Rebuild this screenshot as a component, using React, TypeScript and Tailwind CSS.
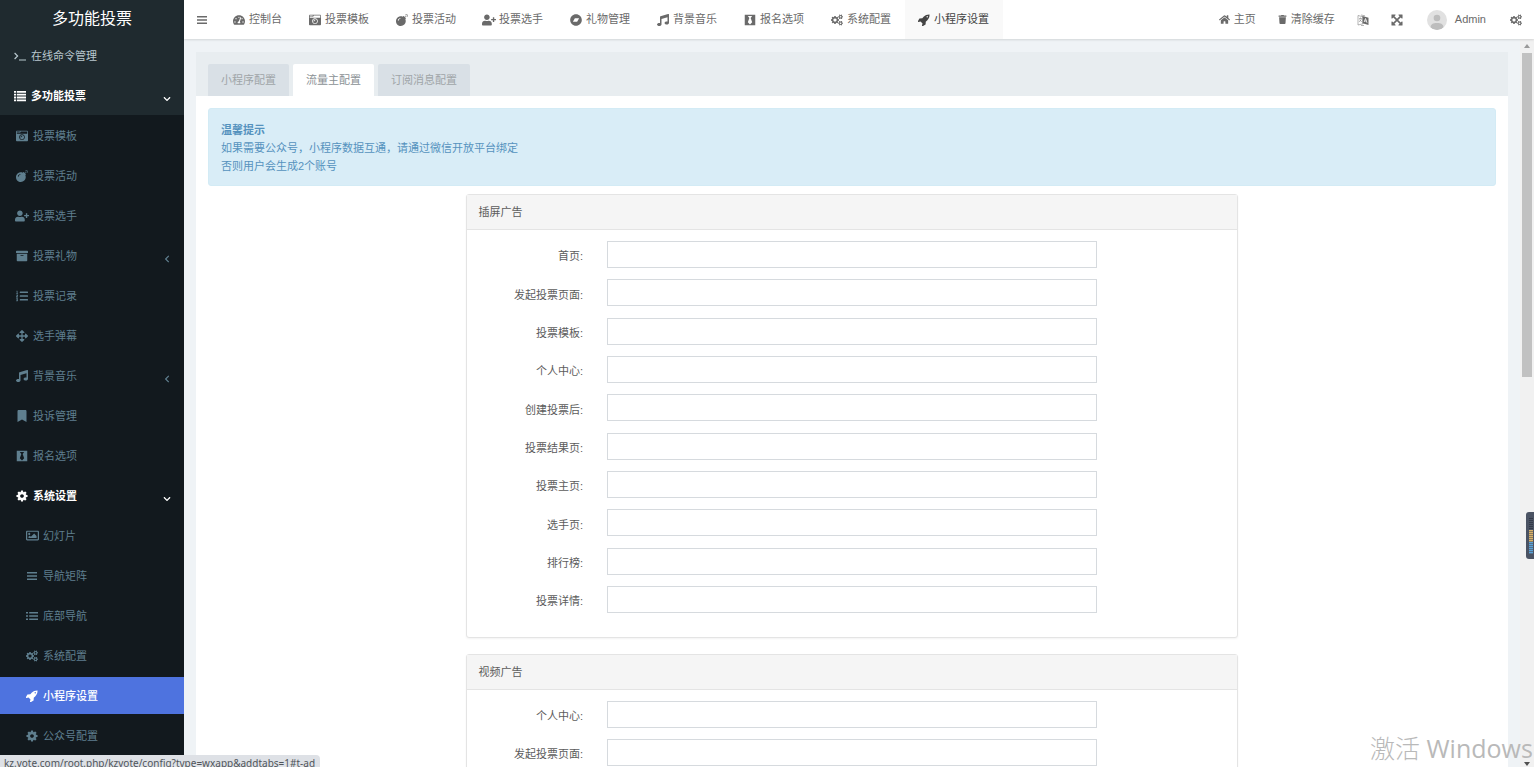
import type { ComponentType } from "react";
import clsx from "clsx";
import {
  FaArchive,
  FaArrowsAlt,
  FaBandcamp,
  FaBlackTie,
  FaBomb,
  FaBookmark,
  FaCameraRetro,
  FaChevronDown,
  FaHome,
  FaListOl,
  FaMusic,
  FaRegImage,
  FaTachometerAlt,
  FaTrash,
  FaUserPlus,
} from "react-icons/fa";

type IconProps = { className?: string };
type Icon = ComponentType<IconProps>;

function CogsIcon({ className }: IconProps) {
  return (
    <svg viewBox="0 0 1920 1792" fill="currentColor" className={className} aria-hidden="true">
      <path d="M896 896q0-106-75-181t-181-75-181 75-75 181 75 181 181 75 181-75 75-181zm768 512q0-52-38-90t-90-38-90 38-38 90q0 53 37.500 90.500t90.500 37.500 90.500-37.500 37.500-90.500zm0-1024q0-52-38-90t-90-38-90 38-38 90q0 53 37.500 90.500t90.500 37.500 90.500-37.500 37.500-90.500zm-384 421v185q0 10-7 19.500t-16 10.500l-155 24q-11 35-32 76 34 48 90 115 7 11 7 20 0 12-7 19-23 30-82.500 89.500t-78.500 59.500q-11 0-21-7l-115-90q-37 19-77 31-11 108-23 155-7 24-30 24h-186q-11 0-20-7.500t-10-17.500l-23-153q-34-10-75-31l-118 89q-7 7-20 7-11 0-21-8-144-133-144-160 0-9 7-19 10-14 41-53t47-61q-23-44-35-82l-152-24q-10-1-17-9.500t-7-19.500v-185q0-10 7-19.500t16-10.500l155-24q11-35 32-76-34-48-90-115-7-11-7-20 0-12 7-20 22-30 82-89t79-59q11 0 21 7l115 90q34-18 77-32 11-108 23-154 7-24 30-24h186q11 0 20 7.500t10 17.500l23 153q34 10 75 31l118-89q8-7 20-7 11 0 21 8 144 133 144 160 0 8-7 19-12 16-42 54t-45 60q23 48 34 82l152 23q10 2 17 10.500t7 19.500zm640 533v140q0 16-149 31-12 27-30 52 51 113 51 138 0 4-4 7-122 71-124 71-8 0-46-47t-52-68q-20 2-30 2t-30-2q-14 21-52 68t-46 47q-2 0-124-71-4-3-4-7 0-25 51-138-18-25-30-52-149-15-149-31v-140q0-16 149-31 13-29 30-52-51-113-51-138 0-4 4-7 4-2 35-20t59-34 30-16q8 0 46 46.500t52 67.500q20-2 30-2t30 2q51-71 92-112l6-2q4 0 124 70 4 3 4 7 0 25-51 138 17 23 30 52 149 15 149 31zm0-1024v140q0 16-149 31-12 27-30 52 51 113 51 138 0 4-4 7-122 71-124 71-8 0-46-47t-52-68q-20 2-30 2t-30-2q-14 21-52 68t-46 47q-2 0-124-71-4-3-4-7 0-25 51-138-18-25-30-52-149-15-149-31v-140q0-16 149-31 13-29 30-52-51-113-51-138 0-4 4-7 4-2 35-20t59-34 30-16q8 0 46 46.500t52 67.500q20-2 30-2t30 2q51-71 92-112l6-2q4 0 124 70 4 3 4 7 0 25-51 138 17 23 30 52 149 15 149 31z" />
    </svg>
  );
}

function CogIcon({ className }: IconProps) {
  return (
    <svg viewBox="64 64 1664 1664" fill="currentColor" className={className} aria-hidden="true">
      <path d="M1152 896q0-106-75-181t-181-75-181 75-75 181 75 181 181 75 181-75 75-181zm512-109v222q0 12-8 23t-20 13l-185 28q-19 54-39 91 35 50 107 138 10 12 10 25t-9 23q-27 37-99 108t-94 71q-12 0-26-9l-138-108q-44 23-91 38-16 136-29 186-7 28-36 28h-222q-14 0-24.500-8.500t-11.500-21.500l-28-184q-49-16-90-37l-141 107q-10 9-25 9-14 0-25-11-126-114-165-168-7-10-7-23 0-12 8-23 15-21 51-66.500t54-70.500q-27-50-41-99l-183-27q-13-2-21-12.500t-8-23.500v-222q0-12 8-23t19-13l186-28q14-46 39-92-40-57-107-138-10-12-10-24 0-10 9-23 26-36 98.500-107.500t94.500-71.500q13 0 26 10l138 107q44-23 91-38 16-136 29-186 7-28 36-28h222q14 0 24.500 8.500t11.500 21.500l28 184q49 16 90 37l142-107q9-9 24-9 13 0 25 10 129 119 165 170 7 8 7 22 0 12-8 23-15 21-51 66.500t-54 70.500q26 50 41 98l183 28q13 2 21 12.500t8 23.500z" />
    </svg>
  );
}

function RocketIcon({ className }: IconProps) {
  return (
    <svg viewBox="64 64 1664 1664" fill="currentColor" className={className} aria-hidden="true">
      <path d="M1440 448q0-40-28-68t-68-28-68 28-28 68 28 68 68 28 68-28 28-68zm224-288q0 249-75.500 430.500t-253.500 360.500q-81 80-195 176l-20 379q-2 16-16 26l-384 224q-7 4-16 4-12 0-23-9l-64-64q-13-14-8-32l85-276-281-281-276 85q-3 1-9 1-14 0-23-9l-64-64q-17-19-5-39l224-384q10-14 26-16l379-20q96-114 176-195 188-187 358-258t431-71q14 0 24 9.500t10 22.500z" />
    </svg>
  );
}

function ExpandIcon({ className }: IconProps) {
  return (
    <svg viewBox="64 64 1664 1664" fill="currentColor" className={className} aria-hidden="true">
      <path d="M1411 541l-355 355 355 355 144-144q29-31 70-14 39 17 39 59v448q0 26-19 45t-45 19h-448q-42 0-59-40-17-39 14-69l144-144-355-355-355 355 144 144q31 30 14 69-17 40-59 40h-448q-26 0-45-19t-19-45v-448q0-42 40-59 39-17 69 14l144 144 355-355-355-355-144 144q-19 19-45 19-12 0-24-5-40-17-40-59v-448q0-26 19-45t45-19h448q42 0 59 40 17 39-14 69l-144 144 355 355 355-355-144-144q-31-30-14-69 17-40 59-40h448q26 0 45 19t19 45v448q0 42-39 59-13 5-25 5-26 0-45-19z" />
    </svg>
  );
}

function BarsIcon({ className }: IconProps) {
  return (
    <svg viewBox="0 0 12 12" fill="currentColor" className={className} aria-hidden="true">
      <path d="M1 2h10v1.500H1zM1 5.300h10v1.500H1zM1 8.600h10v1.500H1z" />
    </svg>
  );
}

function ListUlIcon({ className }: IconProps) {
  return (
    <svg viewBox="0 0 12 12" fill="currentColor" className={className} aria-hidden="true">
      <path d="M0 2h2v1.600H0zM0 5.200h2v1.600H0zM0 8.400h2V10H0zM3.200 2H12v1.500H3.200zM3.200 5.200H12v1.500H3.200zM3.200 8.400H12v1.500H3.200z" />
    </svg>
  );
}

function TerminalIcon({ className }: IconProps) {
  return (
    <svg viewBox="0 0 12 12" fill="none" stroke="currentColor" strokeWidth="1.2" className={className} aria-hidden="true">
      <path d="M.6 3l3 3-3 3M5 10h7" />
    </svg>
  );
}

function ListIcon({ className }: IconProps) {
  return (
    <svg viewBox="0 0 12 12" fill="currentColor" className={className} aria-hidden="true">
      <path d="M0 1h2v1.800H0zM0 3.800h2v1.800H0zM0 6.600h2v1.800H0zM0 9.400h2v1.800H0zM2.800 1H12v1.800H2.800zM2.800 3.800H12v1.800H2.800zM2.800 6.600H12v1.800H2.800zM2.800 9.400H12v1.800H2.800z" />
    </svg>
  );
}

function LanguageIcon({ className }: IconProps) {
  return (
    <svg viewBox="0 0 12 12" fill="none" className={className} aria-hidden="true">
      <path d="M1 1.500l5 1.300v7L1 11z" stroke="currentColor" strokeWidth="0.500" />
      <path d="M2 4.500h3M3.500 3.500v1M4.500 5L2.200 8M2.500 5.500L4.800 8" stroke="currentColor" strokeWidth="0.500" />
      <path d="M5.500 2l6 1.700v7.300l-6-1.800z" fill="currentColor" />
      <path d="M7.200 8l1.300-3.500L10 8.800M7.700 7h1.800" stroke="white" strokeWidth="0.800" />
      <path d="M4 1l4 .8M4 11.500h3" stroke="currentColor" strokeWidth="0.500" />
    </svg>
  );
}

// the glyph is wider than the others, so it takes a bit more room
function UserPlusIcon() {
  return <FaUserPlus className="-mx-px size-[14px] shrink-0" />;
}

function ImageIcon() {
  return <FaRegImage className="-mr-px size-[13px] shrink-0" />;
}

function Avatar() {
  return (
    <svg viewBox="0 0 20 20" className="size-5 overflow-hidden rounded-full" aria-hidden="true">
      <rect width="20" height="20" fill="#e1e1e1" />
      <circle cx="10" cy="8" r="3.300" fill="#bdbdbd" />
      <path d="M3.500 18c0-4 2.500-5 6.500-5s6.500 1 6.500 5c-2 1.500-4 2-6.500 2s-4.500-.5-6.500-2z" fill="#bdbdbd" />
    </svg>
  );
}

type MenuItem = {
  label: string;
  icon: Icon;
  level: 1 | 2 | 3;
  tone?: "open" | "active";
  arrow?: "left" | "down";
};

const topMenu: MenuItem[] = [
  { label: "在线命令管理", icon: TerminalIcon, level: 1 },
  { label: "多功能投票", icon: ListIcon, level: 1, tone: "open", arrow: "down" },
];

const subMenu: MenuItem[] = [
  { label: "投票模板", icon: FaCameraRetro, level: 2 },
  { label: "投票活动", icon: FaBomb, level: 2 },
  { label: "投票选手", icon: UserPlusIcon, level: 2 },
  { label: "投票礼物", icon: FaArchive, level: 2, arrow: "left" },
  { label: "投票记录", icon: FaListOl, level: 2 },
  { label: "选手弹幕", icon: FaArrowsAlt, level: 2 },
  { label: "背景音乐", icon: FaMusic, level: 2, arrow: "left" },
  { label: "投诉管理", icon: FaBookmark, level: 2 },
  { label: "报名选项", icon: FaBlackTie, level: 2 },
  { label: "系统设置", icon: CogIcon, level: 2, tone: "open", arrow: "down" },
  { label: "幻灯片", icon: ImageIcon, level: 3 },
  { label: "导航矩阵", icon: BarsIcon, level: 3 },
  { label: "底部导航", icon: ListUlIcon, level: 3 },
  { label: "系统配置", icon: CogsIcon, level: 3 },
  { label: "小程序设置", icon: RocketIcon, level: 3, tone: "active" },
  { label: "公众号配置", icon: CogIcon, level: 3 },
];

const navTabs: { label: string; icon: Icon; active?: boolean }[] = [
  { label: "控制台", icon: FaTachometerAlt },
  { label: "投票模板", icon: FaCameraRetro },
  { label: "投票活动", icon: FaBomb },
  { label: "投票选手", icon: UserPlusIcon },
  { label: "礼物管理", icon: FaBandcamp },
  { label: "背景音乐", icon: FaMusic },
  { label: "报名选项", icon: FaBlackTie },
  { label: "系统配置", icon: CogsIcon },
  { label: "小程序设置", icon: RocketIcon, active: true },
];

const popupFields = [
  "首页",
  "发起投票页面",
  "投票模板",
  "个人中心",
  "创建投票后",
  "投票结果页",
  "投票主页",
  "选手页",
  "排行榜",
  "投票详情",
];

const videoFields = ["个人中心", "发起投票页面"];

function SidebarLink({ item }: { item: MenuItem }) {
  const ItemIcon = item.icon;
  return (
    <li className="mb-[3px]">
      <a
        href="#"
        className={clsx(
          "flex h-[37px] items-center gap-[5px] pr-3",
          item.level === 1 && "pl-[14px]",
          item.level === 2 && "pl-4",
          item.level === 3 && "pl-[26px]",
          !item.tone && item.level === 1 && "text-[#b8c7ce]",
          !item.tone && item.level > 1 && "text-[#5f7f8f]",
          item.tone && "text-white",
          item.tone === "open" && "font-bold",
          item.tone === "active" && "bg-[#4e73df] font-medium",
        )}
      >
        <ItemIcon className="size-3 shrink-0" />
        <span className="flex-1 pt-0.5">{item.label}</span>
        {item.arrow === "down" && <FaChevronDown className="mt-1.5 size-2.5 p-px" />}
        {item.arrow === "left" && <FaChevronDown className="mt-1.5 size-2.5 rotate-90 p-px" />}
      </a>
    </li>
  );
}

function Sidebar() {
  return (
    <aside className="flex w-[184px] shrink-0 flex-col overflow-hidden bg-[#12191e]">
      <div className="bg-[#1f2a2f]">
        <a href="#" className="flex h-[37px] items-center justify-center text-base text-white">
          多功能投票
        </a>
        <ul className="-mb-0.5">
          {topMenu.map((item) => (
            <SidebarLink key={item.label} item={item} />
          ))}
        </ul>
      </div>
      <ul className="bg-[#12191e] pt-0.5">
        {subMenu.map((item) => (
          <SidebarLink key={item.label} item={item} />
        ))}
      </ul>
    </aside>
  );
}

function Header() {
  return (
    <header className="z-10 flex h-[39px] shrink-0 items-stretch bg-white text-[#6a6a6a] shadow-[0_1px_2px_rgba(0,0,0,0.12)]">
      <button type="button" aria-label="menu" className="flex w-9 items-center justify-center">
        <BarsIcon className="size-3" />
      </button>
      <nav className="flex flex-1">
        {navTabs.map(({ label, icon: TabIcon, active }) => (
          <a
            key={label}
            href="#"
            className={clsx("flex items-center gap-1 pr-[14px] pl-[13px]", active && "bg-[#f9f9f9] text-[#444]")}
          >
            <TabIcon className="size-3 shrink-0" />
            {label}
          </a>
        ))}
      </nav>
      <div className="flex items-center gap-6 pr-3">
        <div className="flex items-center gap-[22px]">
          <a href="#" className="flex items-center gap-1">
            <FaHome className="size-[11px]" />
            主页
          </a>
          <a href="#" className="flex items-center gap-1">
            <FaTrash className="size-[9px]" />
            清除缓存
          </a>
          <button type="button" aria-label="language">
            <LanguageIcon className="size-3" />
          </button>
          <button type="button" aria-label="fullscreen">
            <ExpandIcon className="size-3" />
          </button>
        </div>
        <a href="#" className="flex items-center gap-2">
          <Avatar />
          Admin
        </a>
        <button type="button" aria-label="settings">
          <CogsIcon className="size-3" />
        </button>
      </div>
    </header>
  );
}

type FieldPanelProps = {
  id: string;
  title: string;
  fields: string[];
  bodyClass?: string;
};

function FieldPanel({ id, title, fields, bodyClass }: FieldPanelProps) {
  return (
    <section className="mx-auto mb-4 w-3/5 rounded-[3px] border border-[#e4e4e4] bg-white pb-6 shadow-xs">
      <h3 className="flex h-[35px] items-center border-b border-[#e4e4e4] bg-[#f5f5f5] px-3 text-[#5c5c5c]">{title}</h3>
      <div className={clsx("mt-[11px] flex flex-col justify-between gap-[11px]", bodyClass)}>
        {fields.map((field, i) => (
          <div key={field} className="grid grid-cols-12 items-center">
            <label htmlFor={`${id}-${i}`} className="col-span-2 pt-1 pr-3 text-right text-[#5c5c5c]">
              {field}:
            </label>
            <div className="col-span-8 px-3">
              <input
                id={`${id}-${i}`}
                type="text"
                className="block h-[27px] w-full border border-[#d6dade] bg-white px-2.5 outline-none"
              />
            </div>
          </div>
        ))}
      </div>
    </section>
  );
}

function Scrollbar() {
  return (
    <div className="flex w-[14px] shrink-0 flex-col items-center justify-between bg-[#f1f1f1]" aria-hidden="true">
      <div className="flex flex-col items-center">
        <svg viewBox="0 0 14 14" className="size-[14px]">
          <path d="M4 9l3-4 3 4z" fill="#9a9a9a" />
        </svg>
        <div className="h-[324px] w-2.5 bg-[#c1c1c1]" />
      </div>
      <svg viewBox="0 0 14 8" className="h-2 w-[14px]">
        <path d="M4 3l3 4 3-4z" fill="#505050" />
      </svg>
    </div>
  );
}

export default function App() {
  return (
    <div className="relative flex h-screen overflow-hidden bg-[#eff3f6] font-['Liberation_Sans','Noto_Sans_CJK_SC',sans-serif] text-[11px]">
      <Sidebar />
      <div className="flex min-w-0 flex-1 flex-col">
        <Header />
        <div className="flex min-h-0 flex-1">
          <main className="min-w-0 flex-1 overflow-hidden px-3 pt-[13px]">
            <div className="flex gap-1 bg-[#e8edf0] px-3 pt-3 text-[#a0a5a8]">
              <button type="button" className="h-8 rounded-t-[2px] bg-[#d9e0e6] px-[13px]">
                小程序配置
              </button>
              <button type="button" className="h-8 rounded-t-[2px] bg-white px-[13px] text-[#8a9195]">
                流量主配置
              </button>
              <button type="button" className="h-8 rounded-t-[2px] bg-[#d9e0e6] px-[13px]">
                订阅消息配置
              </button>
            </div>
            <div className="bg-white px-3 pt-3 pb-6">
              <div className="mb-2 rounded-[3px] border border-[#d3ebf5] bg-[#d9edf7] px-3 pt-3 pb-2.5 leading-[18px] text-[#5592be]">
                <strong className="block">温馨提示</strong>
                <p>如果需要公众号，小程序数据互通，请通过微信开放平台绑定</p>
                <p>否则用户会生成2个账号</p>
              </div>
              <FieldPanel id="popup" title="插屏广告" fields={popupFields} bodyClass="min-h-[372px]" />
              <FieldPanel id="video" title="视频广告" fields={videoFields} />
            </div>
          </main>
          <Scrollbar />
        </div>
      </div>

      {/* link preview of the browser */}
      <div className="absolute bottom-0 left-0 h-3 w-80 overflow-hidden rounded-tr bg-[#dee1e6] pl-1 font-['Noto_Sans',sans-serif] text-[10px] leading-4 whitespace-nowrap text-[#50555a]">
        kz.vote.com/root.php/kzvote/config?type=wxapp&amp;addtabs=1#t-ad
      </div>

      {/* side widget */}
      <div className="absolute top-[512px] right-0 flex h-[47px] w-2 flex-col items-center justify-center rounded-l-[3px] bg-[#4b5363] pl-px">
        <div className="h-3 w-1 bg-[repeating-linear-gradient(#343b4a_0_1px,#4b5363_1px_2px)]" />
        <div className="h-3 w-1 bg-[repeating-linear-gradient(#d9b26a_0_1px,#8c7a5c_1px_2px)]" />
        <div className="h-3 w-1 bg-[repeating-linear-gradient(#5aa3d8_0_1px,#55708c_1px_2px)]" />
      </div>

      <div className="pointer-events-none absolute bottom-0 left-[calc(100%-164px)] text-[25px] leading-[38px] whitespace-nowrap text-[#b9b9b9] font-['Open_Sans','Noto_Sans_CJK_SC',sans-serif]">
        <span className="font-light">激活</span> Windows
      </div>
    </div>
  );
}
